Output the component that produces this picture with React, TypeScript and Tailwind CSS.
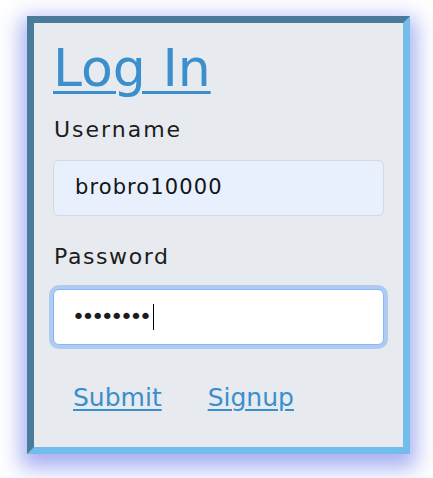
import React from 'react';

const font = { fontFamily: '"DejaVu Sans", "Noto Sans", sans-serif' };

const App = () => {
  return (
    <div className="min-h-screen bg-white pt-[16px] pl-[27px]" style={font}>
      <div className="w-[383px] h-[438px] border-[7px] border-t-[#4b7b9b] border-l-[#4b7b9b] border-r-[#72bde9] border-b-[#72bde9] bg-[#e7eaef] px-[19px] shadow-[0_8px_20px_6px_rgba(80,95,230,0.5)]">
        <h1 className="mt-[14px] text-[52px] leading-[62px] text-[#3a8fcc] underline decoration-[3px] underline-offset-[5px]">
          Log In
        </h1>
        <label className="mt-[18px] block pl-[1px] text-[22px] leading-[26px] tracking-[2px] text-[#1c1c1c]">
          Username
        </label>
        <div className="mt-[17px] flex h-[56px] items-center rounded-md border border-[#d4d9de] bg-[#e8f0fe] pl-[21px] text-[21px] tracking-[1.1px] text-[#141414]">
          brobro10000
        </div>
        <label className="mt-[28px] block pl-[1px] text-[22px] leading-[26px] tracking-[1.6px] text-[#1c1c1c]">
          Password
        </label>
        <div className="mt-[19px] flex h-[56px] items-center rounded-md border border-[#86b7fe] bg-white pl-[18px] shadow-[0_0_0_4px_rgba(13,110,253,0.25)]">
          <span className="text-[22px] leading-[26px] tracking-[-3.4px] text-[#1c1c1c]">••••••••</span>
          <span className="ml-[4px] h-[26px] w-[1px] bg-black" />
        </div>
        <div className="mt-[38px] flex gap-[46px] pl-[20px] text-[25px] leading-[30px] text-[#3a8fcc]">
          <a href="#" className="underline decoration-2 underline-offset-[3px]">
            Submit
          </a>
          <a href="#" className="underline decoration-2 underline-offset-[3px]">
            Signup
          </a>
        </div>
      </div>
    </div>
  );
};

export default App;
